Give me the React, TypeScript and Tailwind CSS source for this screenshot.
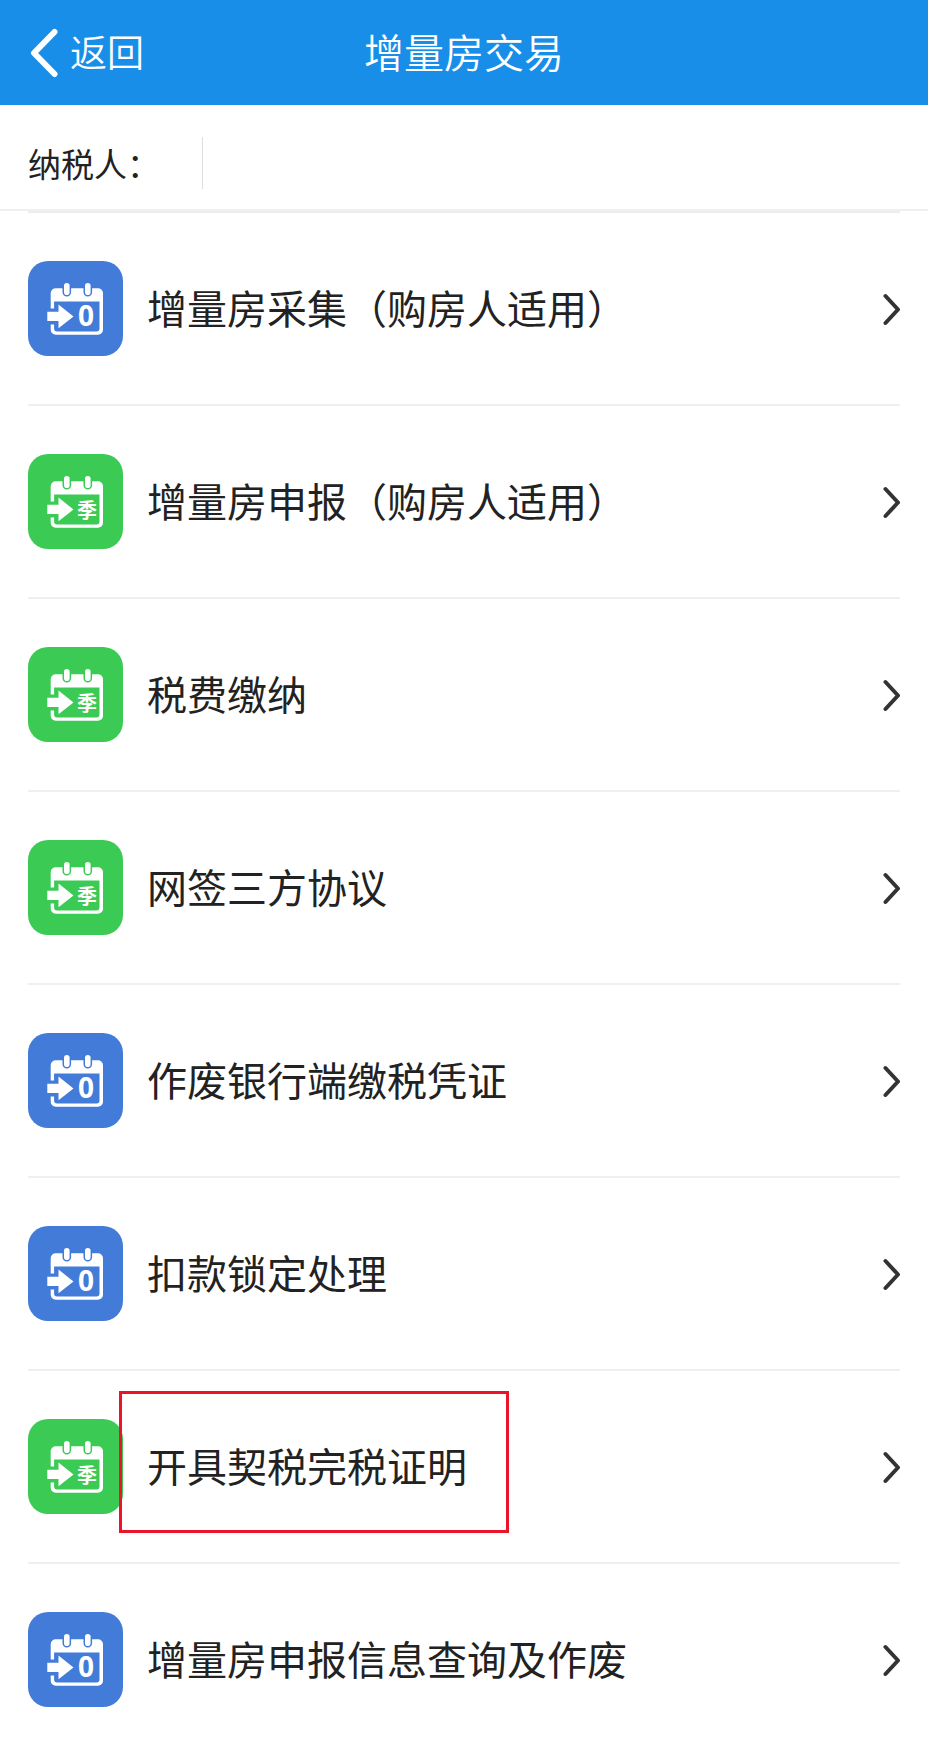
type IconKind = "zero" | "quarter";

type MenuItem = {
  label: string;
  kind: IconKind;
  marked?: boolean;
};

const menuItems: MenuItem[] = [
  { label: "增量房采集（购房人适用）", kind: "zero" },
  { label: "增量房申报（购房人适用）", kind: "quarter" },
  { label: "税费缴纳", kind: "quarter" },
  { label: "网签三方协议", kind: "quarter" },
  { label: "作废银行端缴税凭证", kind: "zero" },
  { label: "扣款锁定处理", kind: "zero" },
  { label: "开具契税完税证明", kind: "quarter", marked: true },
  { label: "增量房申报信息查询及作废", kind: "zero" },
];

const CalendarIcon = ({ kind }: { kind: IconKind }) => {
  const color = kind === "zero" ? "#427bd8" : "#3bcb55";

  return (
    <svg viewBox="0 0 95 95" className="size-[95px] shrink-0" aria-hidden="true">
      <rect width="95" height="95" rx="20" fill={color} />
      {/* calendar body */}
      <path d="M22.7 47.5V32.3a5 5 0 0 1 5-5H70a5 5 0 0 1 5 5v36.4a5 5 0 0 1-5 5H27.7a5 5 0 0 1-5-5v-5.2h3.4v3.9a3 3 0 0 0 3 3h39.4a3 3 0 0 0 3-3V40.4H26.1v7.1z" fill="#fff" />
      <rect x="36" y="22" width="5.6" height="12" rx="2.8" fill="#fff" stroke={color} strokeWidth="3" paintOrder="stroke" />
      <rect x="57" y="22" width="5.6" height="12" rx="2.8" fill="#fff" stroke={color} strokeWidth="3" paintOrder="stroke" />
      <path d="M19.3 50.7h11.2V43.500l15 11.900-15 11.800V60H19.3z" fill="#fff" />
      {kind === "zero" ? (
        <text x="58" y="65" textAnchor="middle" fill="#fff" className="font-['Open_Sans',sans-serif] text-[28px] font-bold">
          0
        </text>
      ) : (
        <text x="59" y="64" textAnchor="middle" fill="#fff" className="font-['Noto_Sans_CJK_SC',sans-serif] text-[20px] font-bold">
          季
        </text>
      )}
    </svg>
  );
};

const MenuRow = ({ label, kind, marked }: MenuItem) => {
  return (
    <li className="border-b-2 border-[#efefef] last:border-transparent">
      <a href="#" className="flex items-center py-12">
        <CalendarIcon kind={kind} />
        <span className="relative ml-6 pb-1 text-[40px] leading-[60px]">
          {label}
          {marked && <span className="absolute -top-11 -right-[42px] -bottom-[34px] -left-7 border-3 border-[#ec1428]" />}
        </span>
        <svg viewBox="0 0 20 34" className="ml-auto h-[34px] w-5 shrink-0" fill="none" aria-hidden="true">
          <path d="M5.5 4L18 17.500 5.500 31" stroke="#333" strokeWidth="4" strokeLinecap="round" strokeLinejoin="round" />
        </svg>
      </a>
    </li>
  );
};

const App = () => {
  return (
    <div className="min-h-screen bg-white font-['Noto_Sans_CJK_SC',sans-serif] text-[#222]">
      <header className="grid h-[105px] grid-cols-[1fr_auto_1fr] items-center bg-[#188ee9] px-7 text-white">
        <button type="button" className="flex items-center gap-3 justify-self-start text-[37px] leading-[54px] font-[350]">
          <svg viewBox="0 0 30 50" className="h-[50px] w-[30px]" fill="none" aria-hidden="true">
            <path d="M26.5 4L6 25l20.5 21" stroke="#fff" strokeWidth="6" strokeLinecap="round" strokeLinejoin="round" />
          </svg>
          <span className="pb-1">返回</span>
        </button>
        <h1 className="pb-1 text-[40px] leading-[60px] font-[350]">增量房交易</h1>
      </header>
      <section className="flex h-[106px] items-center border-b-2 border-[#efefef] px-7 pt-3">
        <p className="text-[33px] leading-[48px]">纳税人：</p>
        <span className="ml-[42px] h-[52px] w-px bg-[#dedede]" />
      </section>
      <main className="px-7">
        <ul className="border-t-2 border-[#ededed]">
          {menuItems.map((item) => (
            <MenuRow key={item.label} {...item} />
          ))}
        </ul>
      </main>
    </div>
  );
};

export default App;
